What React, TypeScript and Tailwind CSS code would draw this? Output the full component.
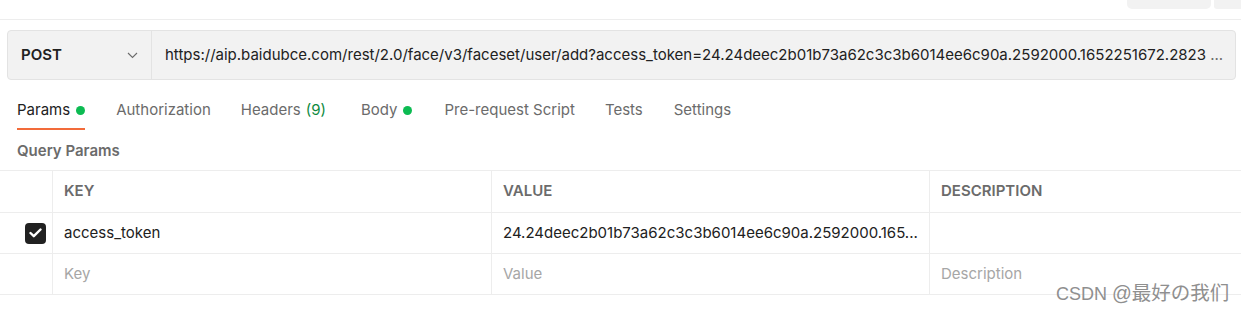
import React from "react";

const Dot = () => <span className="ml-[6px] inline-block h-[9px] w-[9px] rounded-full bg-[#0cbb52]" />;

export default function App() {
  const font = { fontFamily: "Inter, 'Noto Sans', sans-serif" };
  return (
    <div className="relative h-[311px] w-[1241px] overflow-hidden bg-white text-[15px] text-[#212121]" style={font}>
      {/* top strip */}
      <div className="flex h-[20px] justify-end border-b border-[#ededed]">
        <div className="flex h-[9px] gap-[3px]">
          <div className="h-[9px] w-[84px] rounded-b-[5px] bg-[#f2f2f2]" />
          <div className="h-[9px] w-[27px] rounded-bl-[3px] bg-[#f2f2f2]" />
        </div>
      </div>

      {/* URL bar */}
      <div className="ml-[7px] mr-[5px] mt-[10px] flex h-[50px] items-center rounded-[4px] border border-[#e3e3e3] bg-[#f2f2f2]">
        <div className="flex h-full w-[144px] items-center justify-between border-r border-[#e3e3e3] pl-[13px] pr-[13px]">
          <span className="text-[15px] font-semibold text-[#212121]">POST</span>
          <svg width="11" height="7" viewBox="0 0 11 7" fill="none" className="mt-[1px]">
            <path d="M1 1l4.5 4.5L10 1" stroke="#6b6b6b" strokeWidth="1.1" />
          </svg>
        </div>
        <div className="flex-1 truncate whitespace-nowrap pl-[13px] text-[15px] text-[#212121]">
          https://aip.baidubce.com/rest/2.0/face/v3/faceset/user/add?access_token=24.24deec2b01b73a62c3c3b6014ee6c90a.2592000.1652251672.2823 <span className="text-[#6b6b6b]">...</span>
        </div>
      </div>

      {/* tabs */}
      <div className="mt-[13px] flex h-[38px] items-start pl-[17px] text-[15px] text-[#6b6b6b]">
        <div className="flex h-[37px] flex-col">
          <div className="flex h-[35px] items-center text-[#212121]">
            Params
            <Dot />
          </div>
          <div className="h-[2px] w-full bg-[#f26b3a]" />
        </div>
        <div className="ml-[31px] flex h-[35px] items-center">Authorization</div>
        <div className="ml-[30px] flex h-[35px] items-center">
          Headers <span className="ml-[5px] text-[#0f8a3f]">(9)</span>
        </div>
        <div className="ml-[35px] flex h-[35px] items-center">
          Body
          <Dot />
        </div>
        <div className="ml-[32px] flex h-[35px] items-center">Pre-request Script</div>
        <div className="ml-[30px] flex h-[35px] items-center">Tests</div>
        <div className="ml-[31px] flex h-[35px] items-center">Settings</div>
      </div>

      {/* Query params */}
      <div className="flex h-[39px] items-center pl-[17px] pt-[2px] text-[15px] font-semibold text-[#6b6b6b]">Query Params</div>

      <div className="border-t border-[#ededed]">
        <div className="grid h-[42px] grid-cols-[53px_439px_438px_1fr] border-b border-[#ededed] text-[15px] font-semibold text-[#6b6b6b]">
          <div className="border-r border-[#ededed]" />
          <div className="flex items-center border-r border-[#ededed] pl-[11px]">KEY</div>
          <div className="flex items-center border-r border-[#ededed] pl-[11px]">VALUE</div>
          <div className="flex items-center pl-[11px]">DESCRIPTION</div>
        </div>
        <div className="grid h-[41px] grid-cols-[53px_439px_438px_1fr] border-b border-[#ededed]">
          <div className="flex items-center justify-end border-r border-[#ededed] pr-[6px]">
            <div className="flex h-[21px] w-[21px] items-center justify-center rounded-[4px] bg-[#212121]">
              <svg width="13" height="10" viewBox="0 0 13 10" fill="none">
                <path d="M1.5 5l3.3 3.2L11.5 1.5" stroke="white" strokeWidth="2.4" strokeLinecap="round" strokeLinejoin="round" />
              </svg>
            </div>
          </div>
          <div className="flex items-center border-r border-[#ededed] pl-[11px]">access_token</div>
          <div className="flex items-center border-r border-[#ededed] pl-[11px]">24.24deec2b01b73a62c3c3b6014ee6c90a.2592000.165...</div>
          <div />
        </div>
        <div className="grid h-[41px] grid-cols-[53px_439px_438px_1fr] border-b border-[#ededed] text-[#a6a6a6]">
          <div className="border-r border-[#ededed]" />
          <div className="flex items-center border-r border-[#ededed] pl-[11px]">Key</div>
          <div className="flex items-center border-r border-[#ededed] pl-[11px]">Value</div>
          <div className="flex items-center pl-[11px]">Description</div>
        </div>
      </div>

      <div
        className="absolute left-[1056px] top-[279px] text-[18px] text-[#8f8f8f]"
        style={{ fontFamily: "Arial, 'Liberation Sans', 'Noto Sans CJK SC', sans-serif" }}
      >
        CSDN <span className="text-[19.5px]">@最好の我们</span>
      </div>
    </div>
  );
}
